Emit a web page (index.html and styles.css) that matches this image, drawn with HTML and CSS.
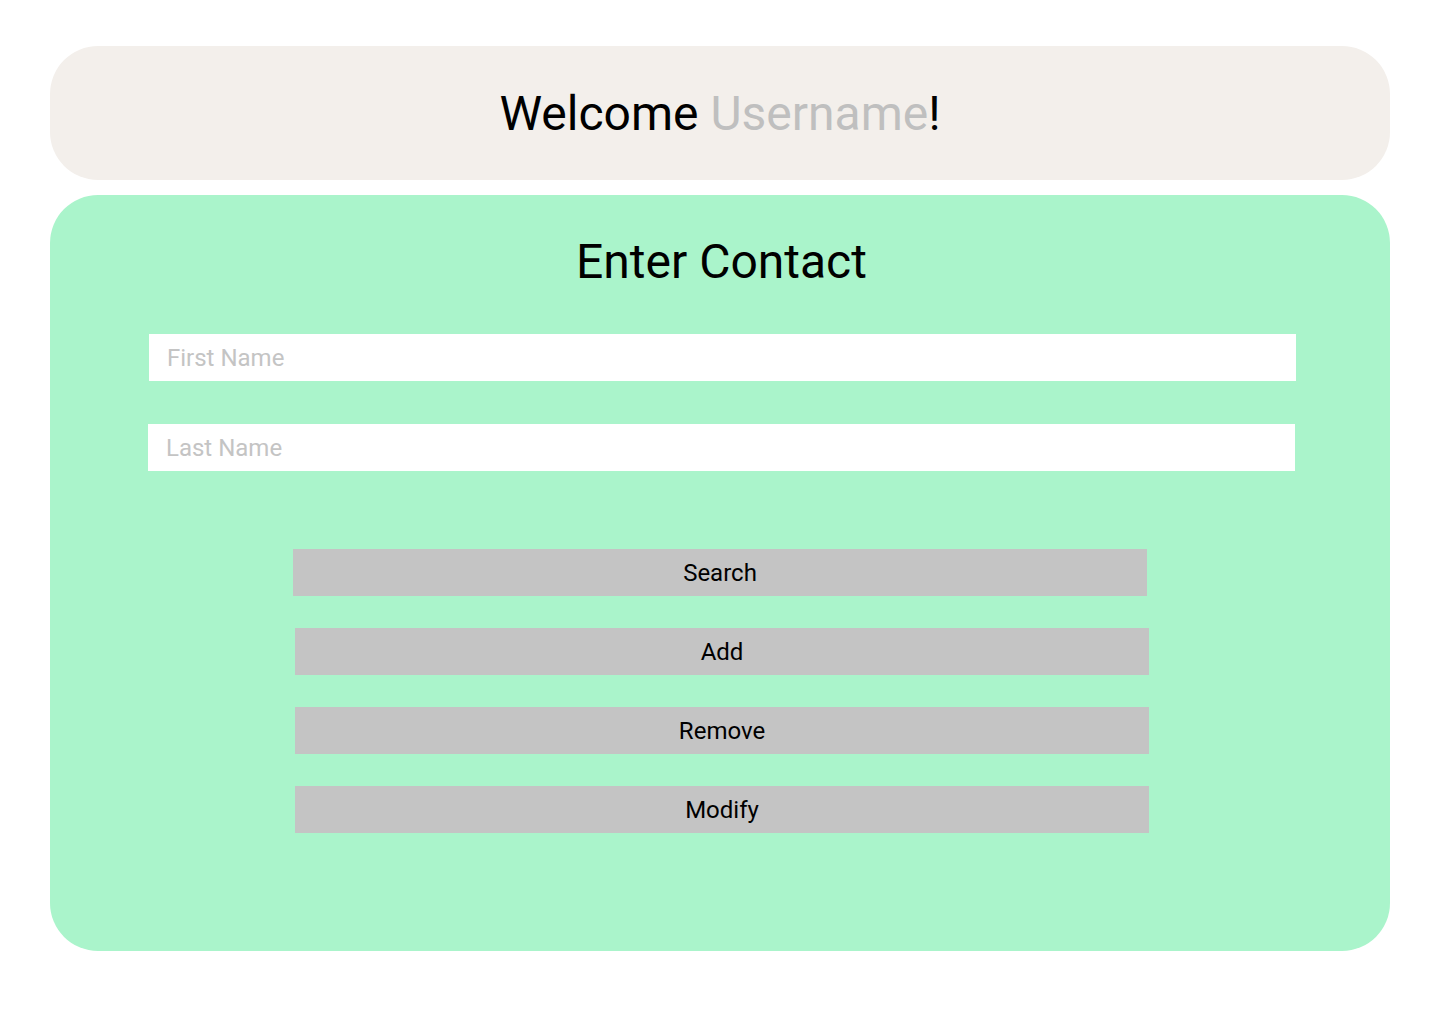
FILE: index.html
```html
<!DOCTYPE html>
<html lang="en">
<head>
<meta charset="utf-8">
<title>Contacts</title>
<link rel="stylesheet" href="styles.css">
</head>
<body>
  <header class="welcome">
    <h1 class="welcome-title">Welcome <span class="username">Username</span>!</h1>
  </header>
  <main class="panel">
    <h2 class="panel-title">Enter Contact</h2>
    <form class="contact-form">
      <input class="field field-first" type="text" placeholder="First Name">
      <input class="field field-last" type="text" placeholder="Last Name">
      <div class="actions">
        <button type="button" class="btn btn-search">Search</button>
        <button type="button" class="btn">Add</button>
        <button type="button" class="btn">Remove</button>
        <button type="button" class="btn">Modify</button>
      </div>
    </form>
  </main>
</body>
</html>
```
FILE: styles.css
```css
html, body {
  margin: 0;
  padding: 0;
  background: #ffffff;
}
body {
  font-family: Roboto, "Liberation Sans", Arial, sans-serif;
  color: #000;
}
.welcome {
  margin: 46px 0 0 50px;
  width: 1340px;
  height: 134px;
  background: #f3efeb;
  border-radius: 48px;
  display: flex;
  align-items: center;
  justify-content: center;
}
.welcome-title {
  margin: 0;
  font-size: 48px;
  font-weight: 400;
  line-height: 56px;
  position: relative;
  top: 1px;
}
.username {
  color: #bfbfbf;
}
.panel {
  margin: 15px 0 0 50px;
  width: 1340px;
  height: 756px;
  box-sizing: border-box;
  padding-top: 39px;
  background: #aaf4cb;
  border-radius: 48px;
  display: flex;
  flex-direction: column;
}
.panel-title {
  margin: 0 0 0 3px;
  font-size: 48px;
  font-weight: 400;
  line-height: 56px;
  text-align: center;
}
.contact-form {
  display: flex;
  flex-direction: column;
  margin-top: 44px;
}
.field {
  box-sizing: border-box;
  width: 1147px;
  height: 47px;
  border: none;
  outline: none;
  padding: 0 0 0 18px;
  background: #ffffff;
  font-family: inherit;
  font-size: 24px;
  color: #000;
}
.field::placeholder {
  color: #c4c4c4;
}
.field-first {
  margin-left: 99px;
}
.field-last {
  margin-left: 98px;
  margin-top: 43px;
}
.actions {
  display: flex;
  flex-direction: column;
  gap: 32px;
  margin-top: 78px;
}
.btn {
  box-sizing: border-box;
  width: 854px;
  height: 47px;
  margin-left: 245px;
  border: none;
  padding: 0;
  background: #c4c4c4;
  font-family: inherit;
  font-size: 24px;
  line-height: 28px;
  color: #000;
}
.btn-search {
  margin-left: 243px;
}
```
